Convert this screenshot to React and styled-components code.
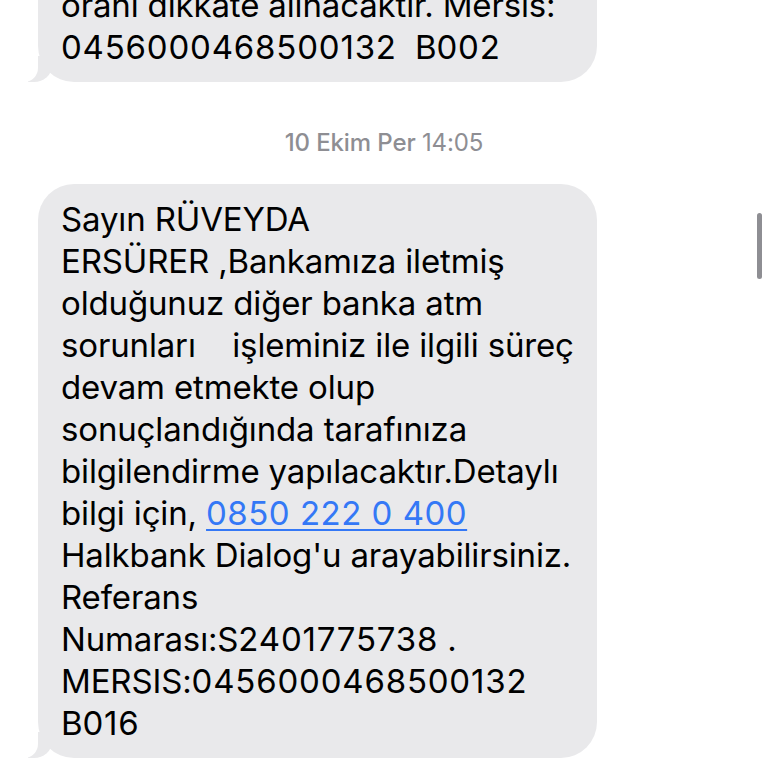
import styled, { createGlobalStyle } from "styled-components";

const GlobalStyle = createGlobalStyle`
  html, body {
    margin: 0;
    padding: 0;
    background: #ffffff;
  }
`;

const Screen = styled.div`
  position: relative;
  width: 768px;
  height: 768px;
  overflow: hidden;
  background: #ffffff;
  font-family: Inter, "Noto Sans", sans-serif;
`;

const Thread = styled.div`
  display: flex;
  flex-direction: column;
  align-items: flex-start;
  padding-left: 38px;
`;

const Bubble = styled.div`
  position: relative;
  box-sizing: border-box;
  width: 559px;
  margin-top: ${({ $clipped }) => ($clipped ? "-30px" : "0")};
  padding: 14px 20px 14px 23px;
  background: #e9e9eb;
  color: #000000;
  border-radius: ${({ $clipped }) => ($clipped ? "0 0 36px 36px" : "36px")};
  font-size: 33px;
  line-height: 42px;
  letter-spacing: -0.15px;
  white-space: pre;

  &::before {
    content: "";
    position: absolute;
    bottom: 0;
    left: -10px;
    width: 24px;
    height: 26px;
    background: #e9e9eb;
    border-bottom-right-radius: 18px 16px;
  }

  &::after {
    content: "";
    position: absolute;
    bottom: 0;
    left: -26px;
    width: 26px;
    height: 28px;
    background: #ffffff;
    border-bottom-right-radius: 14px;
  }
`;

const Line = styled.span`
  display: block;
  position: relative;
  z-index: 1;
`;

const Num = styled.span`
  letter-spacing: 0.8px;
`;

const Link = styled.span`
  color: #3478f6;
  text-decoration: underline;
  text-decoration-thickness: 2px;
  text-underline-offset: 4px;
  letter-spacing: 0.5px;
`;

const Stamp = styled.div`
  align-self: stretch;
  margin: 46px 38px 26px 0;
  text-align: center;
  color: #8e8e93;
  font-size: 24px;
  line-height: 30px;
  font-weight: 500;
  letter-spacing: -0.1px;
`;

const StampTime = styled.span`
  font-weight: 400;
`;

const ScrollThumb = styled.div`
  position: absolute;
  top: 213px;
  right: 6px;
  width: 5px;
  height: 66px;
  border-radius: 3px;
  background: #8e8e93;
`;

const lines = [
  "Sayın RÜVEYDA",
  "ERSÜRER ,Bankamıza iletmiş",
  "olduğunuz diğer banka atm",
  "sorunları    işleminiz ile ilgili süreç",
  "devam etmekte olup",
  "sonuçlandığında tarafınıza",
  "bilgilendirme yapılacaktır.Detaylı",
];

export default function App() {
  return (
    <Screen>
      <GlobalStyle />
      <Thread>
        <Bubble $clipped>
          <Line>oranı dikkate alınacaktır. Mersis:</Line>
          <Line>
            <Num>0456000468500132</Num>  B<Num>002</Num>
          </Line>
        </Bubble>
        <Stamp>
          10 Ekim Per <StampTime>14:05</StampTime>
        </Stamp>
        <Bubble>
          {lines.map((l) => (
            <Line key={l}>{l}</Line>
          ))}
          <Line>
            bilgi için, <Link>0850 222 0 400</Link>
          </Line>
          <Line>Halkbank Dialog'u arayabilirsiniz.</Line>
          <Line>Referans</Line>
          <Line>
            Numarası:S<Num>2401775738</Num> .
          </Line>
          <Line>
            MERSIS:<Num>0456000468500132</Num>
          </Line>
          <Line>
            B<Num>016</Num>
          </Line>
        </Bubble>
      </Thread>
      <ScrollThumb />
    </Screen>
  );
}
